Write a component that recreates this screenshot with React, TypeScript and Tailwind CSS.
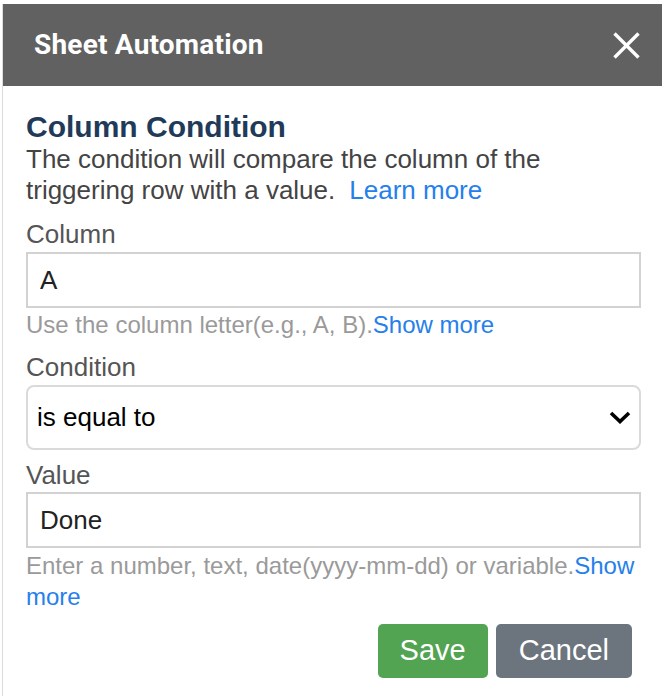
export default function App() {
  return (
    <div className="w-[662px] h-[696px] bg-white overflow-hidden pt-[4px] font-['Liberation_Sans',Arial,sans-serif]">
      <div className="ml-[2px] h-full border-l border-[#dcdcdc] flex flex-col">
        {/* Header */}
        <div className="h-[82px] shrink-0 bg-[#616161] flex items-center justify-between pl-[31px] pr-[22px]">
          <h1 className="text-white font-bold text-[28px] leading-[32px] font-['Roboto',sans-serif] tracking-[0.2px]">Sheet Automation</h1>
          <button className="text-white">
            <svg width="27" height="27" viewBox="0 0 27 27" fill="none" stroke="currentColor" strokeWidth="3.4">
              <line x1="1.5" y1="1.5" x2="25.5" y2="25.5" />
              <line x1="25.5" y1="1.5" x2="1.5" y2="25.5" />
            </svg>
          </button>
        </div>

        {/* Body */}
        <div className="pl-[23px] pr-[21px] pt-[24px]">
          <h2 className="text-[30px] leading-[34px] font-bold text-[#213a5a]">Column Condition</h2>
          <div className="text-[26px] leading-[31px] text-[#444]">
            <div>The condition will compare the column of the</div>
            <div>
              <span>triggering row with a value.</span>
              <a href="#" className="ml-[14px] text-[#2680eb]">Learn more</a>
            </div>
          </div>

          <label className="block mt-[13px] mb-[3px] text-[26px] leading-[30px] text-[#555]">Column</label>
          <input
            readOnly
            value="A"
            className="block w-full h-[56px] border-2 border-[#d2d2d2] px-[12px] text-[26px] text-[#222] outline-none"
          />
          <p className="mt-[2px] text-[24px] leading-[30px] text-[#9a9a9a]">
            Use the column letter(e.g., A, B).<a href="#" className="text-[#2680eb]">Show more</a>
          </p>

          <label className="block mt-[12px] mb-[3px] text-[26px] leading-[30px] text-[#555]">Condition</label>
          <div className="h-[65px] border-2 border-[#dadada] rounded-[8px] flex items-center justify-between pl-[9px] pr-[8px]">
            <span className="text-[26px] text-black">is equal to</span>
            <svg width="22" height="13" viewBox="0 0 22 13" fill="none" stroke="black" strokeWidth="3.6">
              <polyline points="2,2 11,10.5 20,2" />
            </svg>
          </div>

          <label className="block mt-[10px] mb-[2px] text-[26px] leading-[30px] text-[#555]">Value</label>
          <input
            readOnly
            value="Done"
            className="block w-full h-[56px] border-2 border-[#d2d2d2] px-[12px] text-[26px] text-[#222] outline-none"
          />
          <div className="mt-[2px] text-[24px] leading-[31px] text-[#9a9a9a]">
            <div>
              <span>Enter a number, text, date(yyyy-mm-dd) or variable.</span>
              <a href="#" className="text-[#2680eb]">Show</a>
            </div>
            <a href="#" className="block text-[#2680eb]">more</a>
          </div>

          <div className="mt-[12px] flex justify-end gap-[8px] pr-[9px]">
            <button className="h-[54px] px-[22px] rounded-[5px] bg-[#52a352] text-white text-[29px]">Save</button>
            <button className="h-[54px] px-[23px] rounded-[5px] bg-[#6c757d] text-white text-[29px]">Cancel</button>
          </div>
        </div>
      </div>
    </div>
  );
}
